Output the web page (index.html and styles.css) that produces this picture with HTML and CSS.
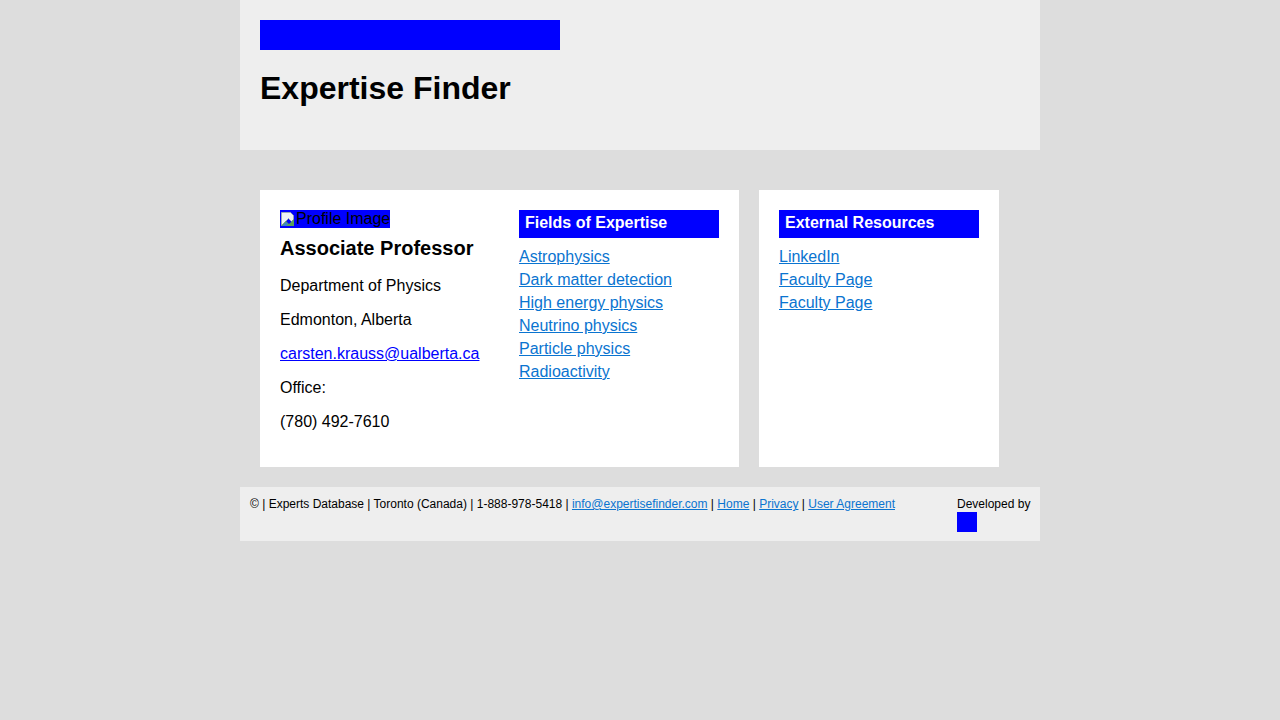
FILE: index.html
```html
<!DOCTYPE html>
<html>
<head>
<meta charset="utf-8">
<title>Expertise Finder</title>
<link rel="stylesheet" href="styles.css">
</head>
<body>
<div class="page">
  <header class="header">
    <div class="logo"></div>
    <h1 class="title">Expertise Finder</h1>
  </header>
  <main class="main">
    <section class="card profile-card">
      <div class="profile">
        <div class="broken-img"><svg class="broken-icon" width="16" height="16" viewBox="0 0 16 16"><path d="M1.5 1.5h9l3 3v4l-2 2-3-3-7 7z" fill="#eef2f6" stroke="#9aa8b4" stroke-width="1"/><path d="M1 15l5-5 3 3 5-5v7z" fill="#5aa05a"/><path d="M2 15l4-4 2 2-2 2z" fill="#3a7fd0"/></svg><span>Profile Image</span></div>
        <h3 class="role">Associate Professor</h3>
        <p class="info">Department of Physics</p>
        <p class="info">Edmonton, Alberta</p>
        <p class="info"><a class="email" href="#">carsten.krauss@ualberta.ca</a></p>
        <p class="info">Office:</p>
        <p class="info">(780) 492-7610</p>
      </div>
      <div class="panel">
        <h4 class="panel-title">Fields of Expertise</h4>
        <ul class="links">
          <li><a href="#">Astrophysics</a></li>
          <li><a href="#">Dark matter detection</a></li>
          <li><a href="#">High energy physics</a></li>
          <li><a href="#">Neutrino physics</a></li>
          <li><a href="#">Particle physics</a></li>
          <li><a href="#">Radioactivity</a></li>
        </ul>
      </div>
    </section>
    <section class="card resources-card">
      <div class="panel">
        <h4 class="panel-title">External Resources</h4>
        <ul class="links">
          <li><a href="#">LinkedIn</a></li>
          <li><a href="#">Faculty Page</a></li>
          <li><a href="#">Faculty Page</a></li>
        </ul>
      </div>
    </section>
  </main>
  <footer class="footer">
    <div class="footer-text">© | Experts Database | Toronto (Canada) | 1-888-978-5418 | <a href="#">info@expertisefinder.com</a> | <a href="#">Home</a> | <a href="#">Privacy</a> | <a href="#">User Agreement</a></div>
    <div class="dev">
      <div>Developed by</div>
      <div class="dev-logo"></div>
    </div>
  </footer>
</div>
</body>
</html>
```
FILE: styles.css
```css
html, body {
  margin: 0;
  padding: 0;
}
body {
  background: #dddddd;
  font-family: "Liberation Sans", Arial, sans-serif;
  color: #000;
}
.page {
  width: 800px;
  margin: 0 auto;
}
.header {
  background: #eeeeee;
  height: 150px;
  box-sizing: border-box;
  padding: 20px;
}
.logo {
  width: 300px;
  height: 30px;
  background: #0000ff;
}
.title {
  margin: 19px 0 0;
  font-size: 32px;
  line-height: 38px;
  font-weight: bold;
}
.main {
  display: flex;
  align-items: stretch;
  gap: 20px;
  padding: 40px 20px 20px;
}
.card {
  background: #fff;
  padding: 20px;
  box-sizing: border-box;
}
.profile-card {
  width: 479px;
  display: flex;
  gap: 20px;
}
.profile {
  width: 219px;
}
.resources-card {
  width: 240px;
}
.broken-img {
  display: flex;
  align-items: center;
  background: #0000ff;
  width: 110px;
  height: 18px;
  font-size: 16px;
  line-height: 18px;
  white-space: nowrap;
}
.broken-icon {
  flex: none;
}
.role {
  margin: 8px 0 0;
  font-size: 20px;
  line-height: 24px;
  font-weight: bold;
}
.info {
  margin: 17px 0 16px;
  font-size: 16px;
  line-height: 18px;
}
.info + .info {
  margin-top: 0;
}
.email {
  color: #0000ff;
}
.panel {
  width: 200px;
}
.panel-title {
  margin: 0;
  background: #0000ff;
  color: #fff;
  font-size: 16px;
  font-weight: bold;
  height: 28px;
  line-height: 26px;
  padding: 0 6px;
}
.links {
  list-style: none;
  margin: 7px 0 0;
  padding: 0;
  font-size: 16px;
  line-height: 23px;
}
.links a, .footer a {
  color: #0a74d0;
}
.footer {
  background: #eeeeee;
  display: flex;
  justify-content: space-between;
  padding: 10px;
  height: 54px;
  box-sizing: border-box;
  font-size: 12px;
  line-height: 14px;
}
.dev {
  width: 73px;
  white-space: nowrap;
}
.dev-logo {
  width: 20px;
  height: 20px;
  background: #0000ff;
  margin-top: 1px;
}
```
